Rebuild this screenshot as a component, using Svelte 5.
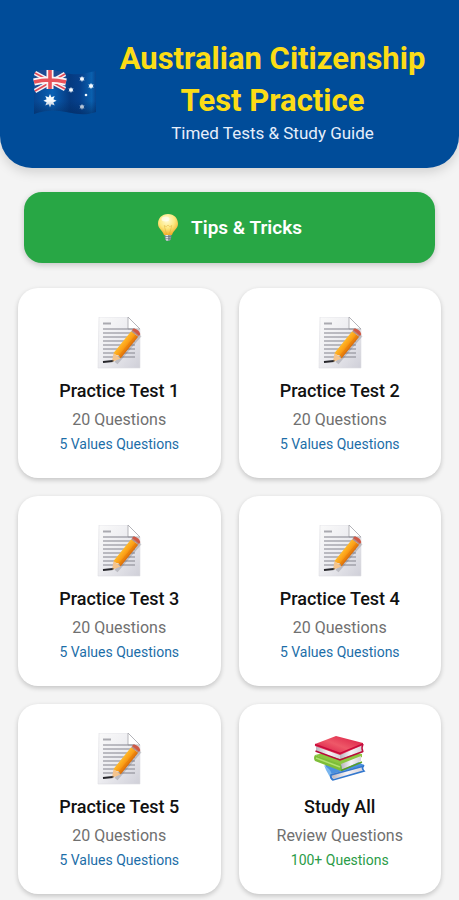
<script lang="ts">
  interface Card {
    title: string;
    detail: string;
    note: string;
    icon: 'memo' | 'books';
  }

  const tests: Card[] = [1, 2, 3, 4, 5].map((n) => ({
    title: `Practice Test ${n}`,
    detail: '20 Questions',
    note: '5 Values Questions',
    icon: 'memo',
  }));

  const cards: Card[] = [
    ...tests,
    { title: 'Study All', detail: 'Review Questions', note: '100+ Questions', icon: 'books' },
  ];

  const lines = [12, 16, 20, 24, 28, 32, 36, 40];
</script>

<svelte:head>
  <title>Australian Citizenship Test Practice</title>
</svelte:head>

<!-- Shared gradients -->
<svg class="defs" width="0" height="0" aria-hidden="true">
  <defs>
    <linearGradient id="flag-cloth" x1="0" x2="1" y1="0" y2="0">
      <stop offset="0" stop-color="#07458f" />
      <stop offset="0.3" stop-color="#0a60b4" />
      <stop offset="0.58" stop-color="#053a80" />
      <stop offset="0.75" stop-color="#06418d" />
      <stop offset="0.93" stop-color="#0a60ae" />
      <stop offset="1" stop-color="#07458f" />
    </linearGradient>
    <linearGradient id="flag-shade" x1="0" x2="0" y1="0" y2="1">
      <stop offset="0.7" stop-color="#022a60" stop-opacity="0" />
      <stop offset="1" stop-color="#022a60" stop-opacity="0.6" />
    </linearGradient>
    <linearGradient id="paper" x1="0" x2="1" y1="0" y2="1">
      <stop offset="0" stop-color="#fafafa" />
      <stop offset="0.5" stop-color="#ececf0" />
      <stop offset="1" stop-color="#cfcfd8" />
    </linearGradient>
    <linearGradient id="pencil" x1="0" x2="1" y1="0" y2="0">
      <stop offset="0" stop-color="#ffb92a" />
      <stop offset="0.5" stop-color="#fb9e16" />
      <stop offset="1" stop-color="#d96a08" />
    </linearGradient>
    <radialGradient id="bulb" cx="0.45" cy="0.3" r="0.75">
      <stop offset="0" stop-color="#fffbd5" />
      <stop offset="0.5" stop-color="#fde881" />
      <stop offset="1" stop-color="#f0a51d" />
    </radialGradient>
    <linearGradient id="red-cover" x1="0" x2="1" y1="1" y2="0">
      <stop offset="0" stop-color="#d3083c" />
      <stop offset="0.5" stop-color="#ee5868" />
      <stop offset="1" stop-color="#d81640" />
    </linearGradient>
    <linearGradient id="pages" x1="0" x2="1" y1="0" y2="0">
      <stop offset="0" stop-color="#b9b3bd" />
      <stop offset="0.5" stop-color="#f7f4f7" />
      <stop offset="1" stop-color="#d8d2d8" />
    </linearGradient>
  </defs>
</svg>

<div class="page">
  <header class="header">
    <svg class="flag" viewBox="0 0 64 48" role="img" aria-label="Flag of Australia">
      <g transform="translate(0 2)">
        <path d="M1 3C12-1 22 1 33 4S53 4 63 2V43C53 47 43 45 33 43S12 41 1 45Z" fill="url(#flag-cloth)" />
        <path d="M1 3C12-1 22 1 33 4V21C22 18 12 20 1 23Z" fill="#1d4c95" />
        <path d="M2 4 32 20M32 5 2 22" stroke="#f6f1f4" stroke-width="4.5" />
        <path d="M2 4 32 20M32 5 2 22" stroke="#e34a56" stroke-width="1.6" />
        <path d="M17 1V20M1 13Q16 9 33 13" fill="none" stroke="#fbf3f5" stroke-width="7" />
        <path d="M17 1V20M1 13Q16 9 33 13" fill="none" stroke="#e8525b" stroke-width="3.6" />
        <g fill="#f5fbff">
          <path d="m17 25 1.400 3.300 3.300-1.300-1.300 3.300 3.200 1.500-3.200 1.500 1.300 3.200-3.300-1.200L17 38.500l-1.400-3.200-3.300 1.200 1.300-3.200-3.200-1.500 3.200-1.500-1.300-3.300 3.300 1.300Z" />
          <path d="m49 7 .8 1.500 1.700-.1-.9 1.500.9 1.500-1.700-.1L49 13l-.8-1.700-1.700.1.900-1.500-.9-1.500 1.700.1Z" />
          <path d="m58 14 .9 1.500 1.800-.1-1 1.500 1 1.600-1.800-.1-.9 1.600-.9-1.600-1.800.1 1-1.600-1-1.500 1.800.1Z" />
          <path d="m38 18 .8 1.500 1.700-.1-.9 1.500.9 1.500-1.700-.1L38 24l-.8-1.700-1.700.1.900-1.500-.9-1.500 1.700.1Z" />
          <path d="m49 35 .8 1.500 1.700-.1-.9 1.500.9 1.500-1.700-.1L49 41l-.8-1.700-1.700.1.900-1.500-.9-1.500 1.700.1Z" />
          <circle cx="53" cy="26" r="1.300" />
        </g>
        <path d="M1 3C12-1 22 1 33 4S53 4 63 2V43C53 47 43 45 33 43S12 41 1 45Z" fill="url(#flag-shade)" />
      </g>
    </svg>
    <div class="heading">
      <h1>Australian Citizenship Test Practice</h1>
      <p>Timed Tests &amp; Study Guide</p>
    </div>
  </header>

  <main>
    <button type="button" class="tips">
      <svg class="bulb" viewBox="0 0 22 28" aria-hidden="true">
        <path d="M7.500 20h7l-.6 5.500q-2.900 3-5.800 0Z" fill="#8d99a0" />
        <path d="M8.500 20h2.500v6.500h-2Z" fill="#dbe2e6" />
        <path d="M8 22.500h6M8.200 24.700h5.600" stroke="#66747b" stroke-width=".7" />
        <path d="M11 0C4.800 0 1 4.400 1 9.700c0 4.900 4.800 6.900 6 11.300h8c1.200-4.400 6-6.400 6-11.300C21 4.400 17.200 0 11 0Z" fill="url(#bulb)" />
        <path d="m9.500 20-2.300-8.500 2 1.200L11 11l1.800 1.700 2-1.200L12.500 20" fill="none" stroke="#dba72f" stroke-width=".6" opacity=".7" />
        <ellipse cx="8.500" cy="5" rx="4" ry="2.500" fill="#fff" opacity=".6" />
      </svg>
      <span>Tips &amp; Tricks</span>
    </button>

    <div class="grid">
      {#each cards as card}
        <button type="button" class="card">
          {#if card.icon === 'memo'}
            <svg class="icon" viewBox="0 0 52 52" aria-hidden="true">
              <path d="M6 0H35L47 12V51H5Z" fill="url(#paper)" stroke="#dedee3" stroke-width=".6" />
              <path d="M35 0V12H47Z" fill="#fff" stroke="#a3a3aa" stroke-width=".8" />
              <path d="M10 6.500H18" stroke="#aaaab0" stroke-width="2" />
              {#each lines as y}
                <path d="M10 {y}H42" stroke="#8c8c95" stroke-width="1.100" />
              {/each}
              <path d="M10 45 20 44" fill="none" stroke="#26262b" stroke-width="2" />
              <path d="M23 46 47 18" stroke="#66666f" stroke-width="4" opacity=".3" />
              <g transform="translate(19 45) rotate(39)">
                <path d="M0 0-4.500-8H4.500Z" fill="#f5c48c" />
                <path d="M0 0-1-2H1Z" fill="#333" />
                <path d="M-4.500-8V-36H4.500V-8L1.800-9.500-1.500-8Z" fill="url(#pencil)" />
                <path d="M1.800-9V-36" stroke="#e98209" stroke-width=".8" />
                <path d="M-4.500-36H4.500V-38H-4.500Z" fill="#b48f86" />
                <path d="M-4.500-37.500v-2q4.500-3 9 0v2Z" fill="#cf5844" />
              </g>
            </svg>
          {:else}
            <svg class="icon" viewBox="0 0 52 52" aria-hidden="true">
              <g transform="translate(0 2)">
                <!-- blue book -->
                <path d="M11 30 42 26 50 30 50 32 17 41Z" fill="#4a90df" />
                <path d="M17 39 49 31 48 37 19 44Z" fill="url(#pages)" />
                <path d="M10 30 15 34Q19 38 17 44L12 35Z" fill="#79b5ee" />
                <path d="M50 30q-3 3 0 6L19 45q-3-2-2-5L50 31" fill="none" stroke="#3478ce" stroke-width="1.600" />
                <!-- green book -->
                <path d="M1 20 22 15 48 19 48 22 26 31Z" fill="#8cc63f" />
                <path d="M27 29 47 21V26L28 35Z" fill="url(#pages)" />
                <path d="M1 20 26 29Q29 32 27 36L1 26Q-1 23 1 20Z" fill="#7dbd38" />
                <path d="M2 23 26 32" stroke="#b3e070" stroke-width="1.500" />
                <path d="M27 35.500 48 27" stroke="#5a9e22" stroke-width="1.400" />
                <!-- red book -->
                <path d="M2 11 26 19V24L2 17Z" fill="url(#pages)" />
                <path d="M26 19 48 10V17L26 24Z" fill="url(#pages)" />
                <path d="M1 9 22 1 49 8 49 10 26 20 1 11Z" fill="url(#red-cover)" />
                <path d="M1 9.500 26 18.500 49 9" fill="none" stroke="#c90a3c" stroke-width="1.400" />
                <path d="M1.500 16 26 25 49 16.500" fill="none" stroke="#b80b3a" stroke-width="1.600" />
                <path d="M49 9q-2 4 0 8" fill="none" stroke="#c01040" stroke-width="1.500" />
              </g>
            </svg>
          {/if}
          <span class="title">{card.title}</span>
          <span class="detail">{card.detail}</span>
          <span class="note" class:all={card.icon === 'books'}>{card.note}</span>
        </button>
      {/each}
    </div>
  </main>
</div>

<style>
  :global(body) {
    margin: 0;
    background: #f4f4f4;
  }

  .defs {
    position: absolute;
  }

  .page {
    font-family: Roboto, 'Liberation Sans', sans-serif;
    color: #111;
  }

  .header {
    display: flex;
    align-items: center;
    gap: 8px;
    padding: 38px 26px 24px;
    background: #004c99;
    border-radius: 0 0 32px 32px;
    box-shadow: 0 4px 12px rgba(0, 0, 0, 0.15);
  }

  .flag {
    flex: none;
    width: 64px;
    height: 48px;
    margin: 0 7px;
  }

  .heading {
    flex: 1;
    text-align: center;
  }

  h1 {
    margin: 0;
    color: #fcdc16;
    font-size: 31px;
    font-weight: 700;
    line-height: 42px;
  }

  p {
    margin: 0;
    color: #e6eefa;
    font-size: 17px;
    line-height: 22px;
  }

  main {
    padding: 24px 18px 6px;
  }

  button {
    border: none;
    font-family: inherit;
    cursor: pointer;
  }

  .tips {
    display: flex;
    align-items: center;
    justify-content: center;
    gap: 12px;
    width: calc(100% - 12px);
    height: 71px;
    margin: 0 6px 25px;
    border-radius: 18px;
    background: #28a745;
    color: #fff;
    font-size: 19px;
    font-weight: 600;
    box-shadow: 0 2px 6px rgba(0, 0, 0, 0.2);
  }

  .bulb {
    width: 22px;
    height: 28px;
  }

  .grid {
    display: grid;
    grid-template-columns: 1fr 1fr;
    gap: 18px;
  }

  .card {
    display: flex;
    flex-direction: column;
    align-items: center;
    padding: 29px 8px 21px;
    border-radius: 20px;
    background: #fff;
    box-shadow: 0 2px 5px rgba(0, 0, 0, 0.2);
  }

  .icon {
    width: 52px;
    height: 52px;
    margin-bottom: 8px;
  }

  .title {
    margin-bottom: 2px;
    color: #111;
    font-size: 18px;
    font-weight: 500;
    line-height: 28px;
  }

  .detail {
    color: #707070;
    font-size: 16px;
    line-height: 25px;
  }

  .note {
    color: #1c6ea8;
    font-size: 14px;
    line-height: 25px;
  }

  .note.all {
    color: #2b9c48;
  }
</style>
